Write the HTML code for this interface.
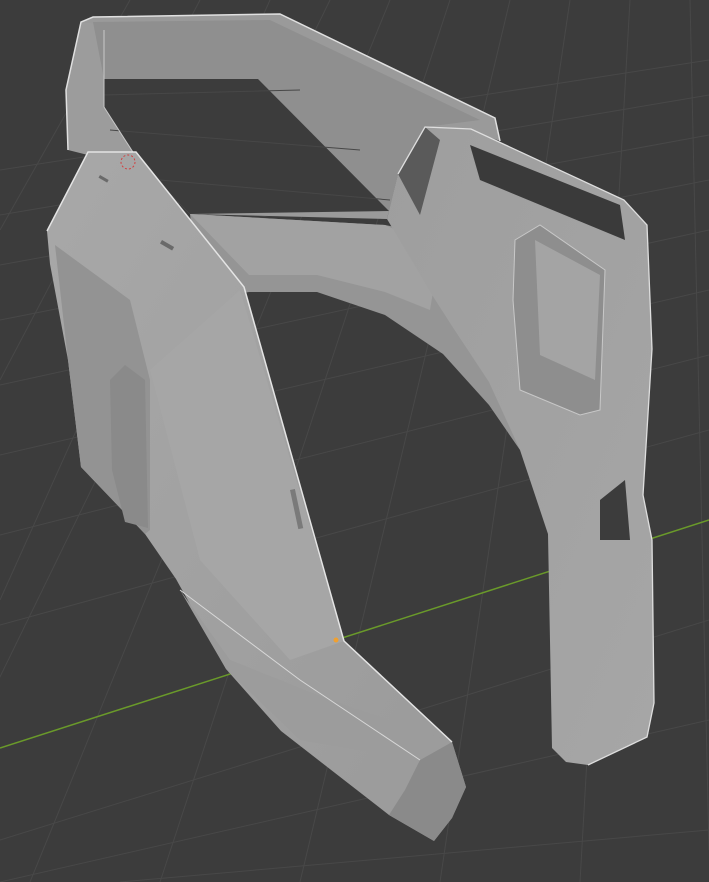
<!DOCTYPE html>
<html><head><style>html,body{margin:0;padding:0;background:#3d3d3d}svg{display:block}</style></head>
<body>
<svg width="709" height="882" viewBox="0 0 709 882" xmlns="http://www.w3.org/2000/svg">
<defs>
<linearGradient id="lf" x1="0" y1="0" x2="1" y2="1"><stop offset="0" stop-color="#a8a8a8"/><stop offset="1" stop-color="#9a9a9a"/></linearGradient>
<linearGradient id="rf" x1="0" y1="0" x2="1" y2="1"><stop offset="0" stop-color="#9e9e9e"/><stop offset="1" stop-color="#a6a6a6"/></linearGradient>
</defs>
<rect width="709" height="882" fill="#3c3c3c"/>
<g stroke="#484848" stroke-width="1" fill="none">
<path d="M0 170 L709 60 M0 215 L709 95 M0 265 L709 135 M0 320 L709 180 M0 385 L709 230 M0 455 L709 290 M0 535 L709 355 M0 625 L709 430 M0 840 L709 620 M0 882 L709 720 M120 882 L709 830"/>
<path d="M-100 882 L330 0 M30 882 L390 0 M160 882 L450 0 M300 882 L510 0 M440 882 L570 0 M580 882 L630 0 M709 850 L690 0 M0 600 L270 0 M0 380 L200 0 M0 230 L130 0"/>
</g>
<path d="M0 748 L709 520" stroke="#6a9a2a" stroke-width="1.5"/>
<!-- back strap -->
<polygon points="81,22 93,17 280,14 495,118 500,141 470,130 425,127 398,174 387,219 190,214 140,163 104,107 104,79 81,60" fill="#9a9a9a"/>
<polygon points="81,22 104,25 104,107 138,160 88,155 68,150 66,90" fill="#9c9c9c"/>
<polygon points="93,22 270,20 480,120 425,127 398,174 389,211 258,79 104,79" fill="#8f8f8f"/>
<polygon points="104,79 258,79 389,211 190,214 140,163 104,107" fill="#3c3c3c"/>
<g stroke="#474747"><path d="M104 95 L300 90 M110 130 L360 150 M160 180 L390 200"/></g>
<path d="M68,150 L66,90 L81,22 L93,17 L280,14 L495,118 L500,141" stroke="#e0e0e0" stroke-width="1.5" fill="none"/>
<path d="M104,30 L104,107 L138,160" stroke="#c8c8c8" stroke-width="1" fill="none"/>
<!-- inner band -->
<polygon points="190,214 385,225 460,240 520,450 489,405 443,354 385,315 317,292 249,292 200,300" fill="#959595"/>
<polygon points="190,214 385,225 440,250 430,310 385,292 317,275 249,275" fill="#a2a2a2"/>
<!-- right piece -->
<polygon points="387,219 398,174 425,127 471,129 624,200 647,225 652,349 643,495 652,540 654,703 647,737 588,765 566,762 552,748 548,534 520,450 489,382 452,326 434,298" fill="url(#rf)"/>
<polygon points="398,174 425,127 440,140 420,215" fill="#5a5a5a"/>
<polygon points="470,145 620,205 625,240 480,180" fill="#3a3a3a"/>
<polygon points="515,240 540,225 605,270 600,410 580,415 520,390 513,300" fill="#8e8e8e" stroke="#c8c8c8"/>
<polygon points="535,240 600,275 595,380 540,355" fill="#a4a4a4"/>
<polygon points="600,500 625,480 630,540 600,540" fill="#3c3c3c"/>
<path d="M398,174 L425,127 L471,129 L624,200 L647,225 L652,349 L643,495 L652,540 L654,703 L647,737 L588,765" stroke="#dedede" stroke-width="1.3" fill="none"/>
<!-- left piece -->
<polygon points="47,231 88,152 136,152 244,287 344,641 452,742 466,787 452,818 434,841 389,815 281,731 226,669 176,579 145,534 81,467 68,360 50,264" fill="url(#lf)"/>
<polygon points="55,245 130,300 150,380 150,530 145,534 81,467 68,360" fill="#939393"/>
<polygon points="110,380 125,365 145,380 148,528 125,522 112,470" fill="#8a8a8a"/>
<polygon points="150,370 240,290 344,641 290,660 200,560" fill="#a6a6a6"/>
<polygon points="389,815 434,841 452,818 466,787 452,742 420,760 405,790" fill="#8a8a8a"/>
<polygon points="180,590 230,660 330,700 452,742 420,760 300,740 226,669" fill="#9c9c9c"/>
<path d="M47,231 L88,152 L136,152 L244,287 L344,641 L452,742" stroke="#e4e4e4" stroke-width="1.5" fill="none"/>
<path d="M180,590 L300,680 L420,760" stroke="#d8d8d8" stroke-width="1" fill="none"/>
<rect x="162" y="240" width="14" height="4" fill="#6a6a6a" transform="rotate(30 162 240)"/>
<rect x="100" y="175" width="10" height="3" fill="#6a6a6a" transform="rotate(30 100 175)"/>
<rect x="290" y="490" width="5" height="40" fill="#7a7a7a" transform="rotate(-12 290 490)"/>
<circle cx="336" cy="640" r="2.5" fill="#f0a030"/>
<circle cx="128" cy="162" r="7" fill="none" stroke="#d04040" stroke-dasharray="2 2"/>
</svg>
</body></html>
